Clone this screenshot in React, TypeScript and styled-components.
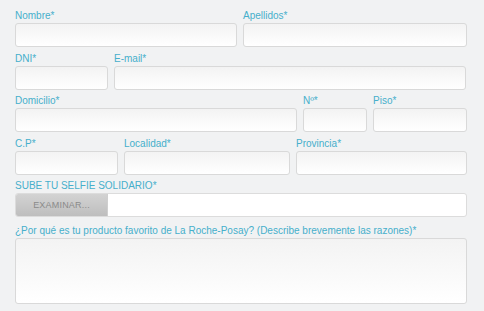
import React from "react";
import styled, { createGlobalStyle } from "styled-components";

const GlobalStyle = createGlobalStyle`
  html, body {
    margin: 0;
    padding: 0;
    background: #f1f2f3;
  }
  body {
    font-family: "Liberation Sans", Arial, sans-serif;
  }
`;

const Form = styled.form`
  display: flex;
  flex-direction: column;
  gap: 4.5px;
  width: 452px;
  padding: 9px 0 0 15px;
`;

const Row = styled.div<{ $cols: string }>`
  display: grid;
  grid-template-columns: ${(p) => p.$cols};
  column-gap: 6px;
`;

const Field = styled.div<{ $spaced?: boolean }>`
  display: flex;
  flex-direction: column;
  margin-top: ${(p) => (p.$spaced ? "2.5px" : "0")};
`;

const Label = styled.label`
  height: 13px;
  line-height: 13px;
  margin-bottom: 1px;
  font-size: 10px;
  color: #46afcb;
  white-space: nowrap;
`;

const inputSkin = `
  box-sizing: border-box;
  width: 100%;
  border: 1px solid #d9d9d9;
  border-radius: 3px;
  background: linear-gradient(to bottom, #f3f3f3, #ffffff);
  outline: none;
  font-family: inherit;
`;

const Input = styled.input`
  ${inputSkin}
  height: 24px;
  padding: 0 6px;
`;

const TextArea = styled.textarea`
  ${inputSkin}
  height: 66px;
  resize: none;
  display: block;
`;

const FileBox = styled.div`
  display: flex;
  height: 24px;
  box-sizing: border-box;
  border: 1px solid #dcdcdc;
  border-radius: 3px;
  background: #fff;
  overflow: hidden;
`;

const FileButton = styled.button.attrs({ type: "button" })`
  width: 92px;
  border: none;
  border-right: 1px solid #cfcfcf;
  background: linear-gradient(to bottom, #d3d3d3, #bebebe);
  color: #8a8a8a;
  font-family: inherit;
  font-size: 9px;
  letter-spacing: 0.2px;
  padding: 0;
`;

function TextField({ label }: { label: string }) {
  return (
    <Field>
      <Label>{label}</Label>
      <Input />
    </Field>
  );
}

export default function App() {
  return (
    <>
      <GlobalStyle />
      <Form>
        <Row $cols="222px 224px">
          <TextField label="Nombre*" />
          <TextField label="Apellidos*" />
        </Row>
        <Row $cols="93px 352px">
          <TextField label="DNI*" />
          <TextField label="E-mail*" />
        </Row>
        <Row $cols="282px 64px 94px">
          <TextField label="Domicilio*" />
          <TextField label="Nº*" />
          <TextField label="Piso*" />
        </Row>
        <Row $cols="103px 166px 171px">
          <TextField label="C.P*" />
          <TextField label="Localidad*" />
          <TextField label="Provincia*" />
        </Row>
        <Field>
          <Label>SUBE TU SELFIE SOLIDARIO*</Label>
          <FileBox>
            <FileButton>EXAMINAR...</FileButton>
          </FileBox>
        </Field>
        <Field $spaced>
          <Label>
            ¿Por qué es tu producto favorito de La Roche-Posay? (Describe
            brevemente las razones)*
          </Label>
          <TextArea />
        </Field>
      </Form>
    </>
  );
}
